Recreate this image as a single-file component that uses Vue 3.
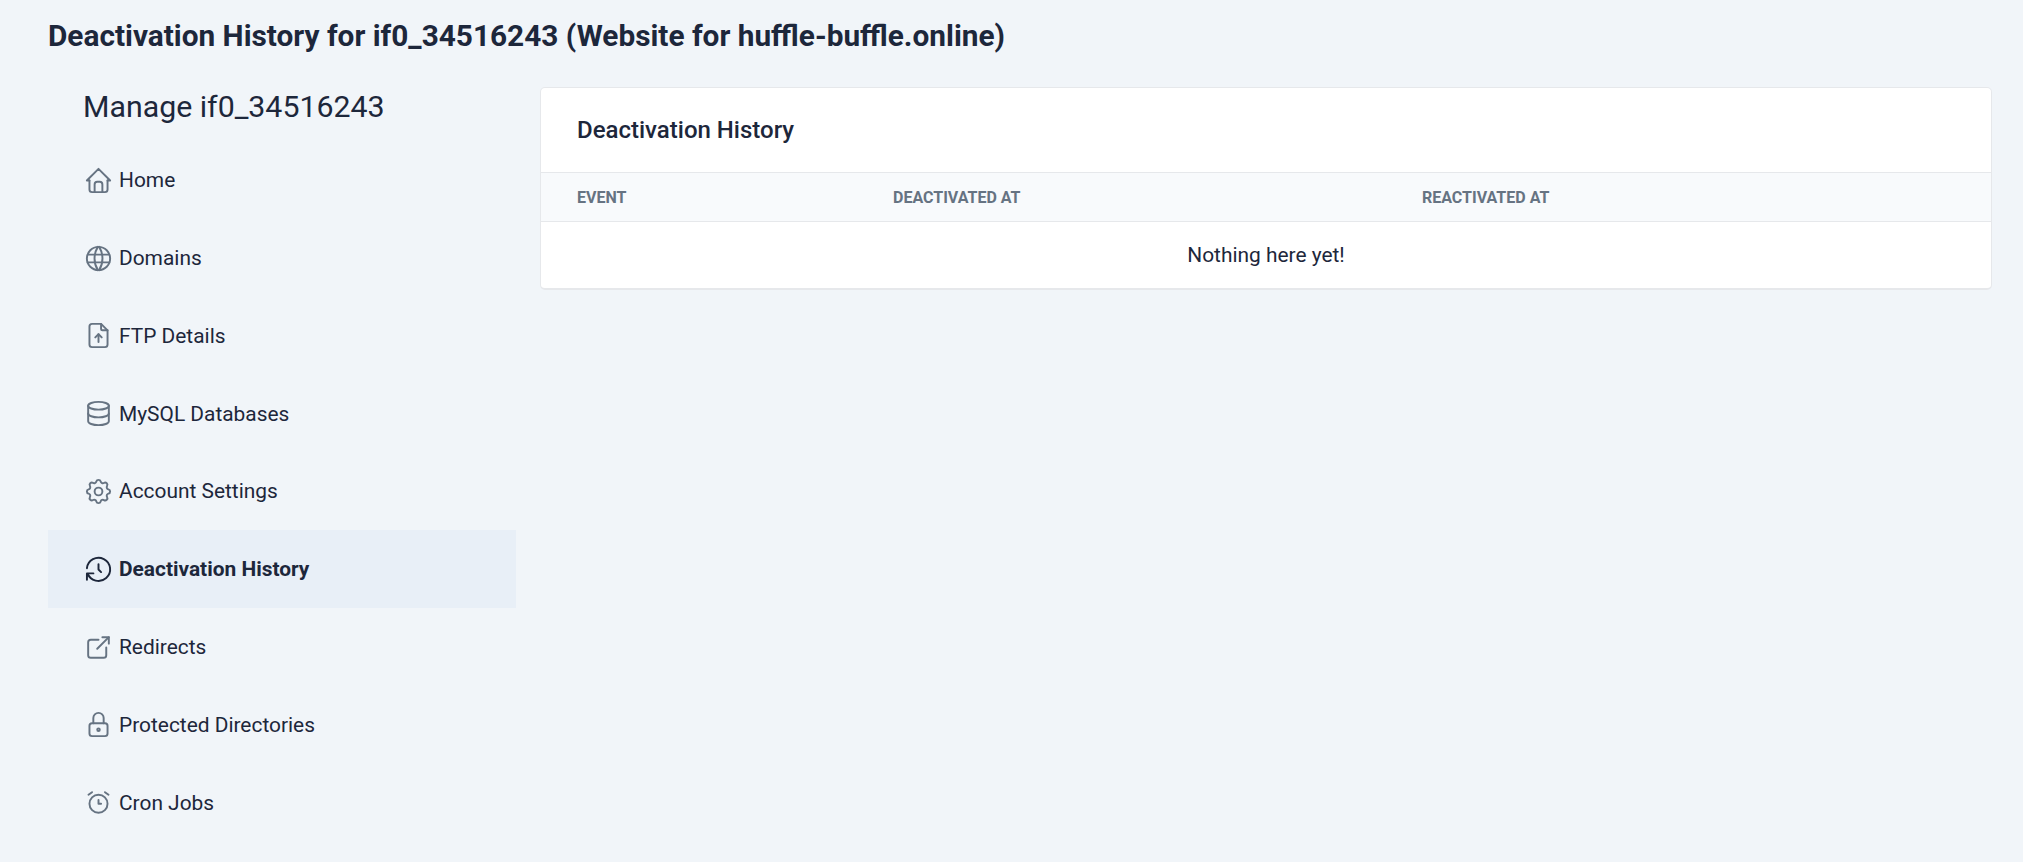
<script setup>
const items = [
  { label: 'Home', paths: ['M5 12l-2 0l9 -9l9 9l-2 0', 'M5 12v7a2 2 0 0 0 2 2h10a2 2 0 0 0 2 -2v-7', 'M9 21v-6a2 2 0 0 1 2 -2h2a2 2 0 0 1 2 2v6'] },
  { label: 'Domains', paths: ['M3 12a9 9 0 1 0 18 0a9 9 0 0 0 -18 0', 'M3.6 9h16.8', 'M3.6 15h16.8', 'M11.5 3a17 17 0 0 0 0 18', 'M12.5 3a17 17 0 0 1 0 18'] },
  { label: 'FTP Details', paths: ['M14 3v4a1 1 0 0 0 1 1h4', 'M17 21h-10a2 2 0 0 1 -2 -2v-14a2 2 0 0 1 2 -2h7l5 5v11a2 2 0 0 1 -2 2z', 'M12 11v6', 'M9.5 13.5l2.5 -2.5l2.5 2.5'] },
  { label: 'MySQL Databases', paths: ['M12 6m-8 0a8 3 0 1 0 16 0a8 3 0 1 0 -16 0', 'M4 6v6a8 3 0 0 0 16 0v-6', 'M4 12v6a8 3 0 0 0 16 0v-6'] },
  { label: 'Account Settings', paths: ['M10.325 4.317c.426 -1.756 2.924 -1.756 3.35 0a1.724 1.724 0 0 0 2.573 1.066c1.543 -.94 3.31 .826 2.37 2.37a1.724 1.724 0 0 0 1.065 2.572c1.756 .426 1.756 2.924 0 3.35a1.724 1.724 0 0 0 -1.066 2.573c.94 1.543 -.826 3.31 -2.37 2.37a1.724 1.724 0 0 0 -2.572 1.065c-.426 1.756 -2.924 1.756 -3.35 0a1.724 1.724 0 0 0 -2.573 -1.066c-1.543 .94 -3.31 -.826 -2.37 -2.37a1.724 1.724 0 0 0 -1.065 -2.572c-1.756 -.426 -1.756 -2.924 0 -3.35a1.724 1.724 0 0 0 1.066 -2.573c-.94 -1.543 .826 -3.31 2.37 -2.37c1 .608 2.296 .07 2.572 -1.065z', 'M9 12a3 3 0 1 0 6 0a3 3 0 0 0 -6 0'] },
  { label: 'Deactivation History', active: true, paths: ['M12 8l0 4l2 2', 'M3.05 11a9 9 0 1 1 .5 4m-.5 5v-5h5'] },
  { label: 'Redirects', paths: ['M12 6h-6a2 2 0 0 0 -2 2v10a2 2 0 0 0 2 2h10a2 2 0 0 0 2 -2v-6', 'M11 13l9 -9', 'M15 4h5v5'] },
  { label: 'Protected Directories', paths: ['M5 13a2 2 0 0 1 2 -2h10a2 2 0 0 1 2 2v6a2 2 0 0 1 -2 2h-10a2 2 0 0 1 -2 -2v-6z', 'M11 16a1 1 0 1 0 2 0a1 1 0 0 0 -2 0', 'M8 11v-4a4 4 0 1 1 8 0v4'] },
  { label: 'Cron Jobs', paths: ['M5 13a7 7 0 1 0 14 0a7 7 0 0 0 -14 0', 'M7 4l-2.75 2', 'M17 4l2.75 2', 'M12 10l0 3l2 0'] },
]
</script>

<template>
  <div class="page">
    <h2 class="title">Deactivation History for if0_34516243 (Website for huffle-buffle.online)</h2>
    <div class="columns">
      <aside class="side">
        <h3 class="manage">Manage if0_34516243</h3>
        <nav class="nav">
          <a v-for="item in items" :key="item.label" class="item" :class="{ active: item.active }">
            <svg class="icon" viewBox="0 0 24 24" fill="none" stroke="currentColor" stroke-width="1.5" stroke-linecap="round" stroke-linejoin="round">
              <path v-for="d in item.paths" :key="d" :d="d" />
            </svg>
            <span>{{ item.label }}</span>
          </a>
        </nav>
      </aside>
      <main class="card">
        <div class="card-head">Deactivation History</div>
        <table class="table">
          <colgroup>
            <col class="c1" />
            <col class="c2" />
            <col class="c3" />
          </colgroup>
          <thead>
            <tr>
              <th>Event</th>
              <th>Deactivated At</th>
              <th>Reactivated At</th>
            </tr>
          </thead>
          <tbody>
            <tr>
              <td colspan="3">Nothing here yet!</td>
            </tr>
          </tbody>
        </table>
      </main>
    </div>
  </div>
</template>

<style>
html, body { margin: 0; background: #f1f5f9; }
</style>

<style scoped>
.page {
  box-sizing: border-box;
  height: 862px;
  overflow: hidden;
  padding: 0 31px 0 48px;
  background: #f1f5f9;
  font-family: Roboto, "Liberation Sans", sans-serif;
  color: #1d273b;
}
.title {
  margin: 0;
  height: 87px;
  padding-top: 16px;
  box-sizing: border-box;
  font-size: 29.8px;
  line-height: 40px;
  font-weight: 700;
  color: #1d273b;
}
.columns {
  display: flex;
  gap: 24px;
  align-items: flex-start;
}
.side {
  flex: 0 0 468px;
}
.manage {
  margin: 0;
  height: 54.4px;
  padding: 1px 35px 0;
  box-sizing: border-box;
  font-size: 30.3px;
  line-height: 38px;
  font-weight: 400;
}
.nav {
  display: flex;
  flex-direction: column;
}
.item {
  display: flex;
  align-items: center;
  height: 77.8px;
  padding: 0 35px;
  font-size: 20.9px;
  color: #1d273b;
}
.icon {
  flex: 0 0 31px;
  width: 31px;
  height: 31px;
  margin-right: 5px;
  color: #667382;
}
.active {
  background: #e8eff7;
  font-weight: 700;
}
.active .icon {
  color: #1d273b;
}
.card {
  flex: 1;
  min-width: 0;
  box-sizing: border-box;
  height: 203px;
  background: #fff;
  border: 1px solid #e6e8eb;
  border-bottom-width: 2px;
  border-radius: 5px;
  overflow: hidden;
}
.card-head {
  box-sizing: border-box;
  height: 84px;
  padding: 0 36px;
  display: flex;
  align-items: center;
  font-size: 24px;
  font-weight: 500;
  color: #1d273b;
}
.table {
  width: 100%;
  table-layout: fixed;
  border-collapse: collapse;
}
.c1 { width: 316px; }
.c2 { width: 529px; }
th {
  box-sizing: border-box;
  height: 49px;
  padding: 0 36px;
  text-align: left;
  text-transform: uppercase;
  font-size: 16px;
  font-weight: 700;
  color: #667382;
  background: #f8fafc;
  border-top: 1px solid #e6e8eb;
  border-bottom: 1px solid #e6e8eb;
}
td {
  height: 66px;
  padding: 0;
  box-sizing: border-box;
  text-align: center;
  font-size: 20.9px;
  color: #1d273b;
}
</style>
